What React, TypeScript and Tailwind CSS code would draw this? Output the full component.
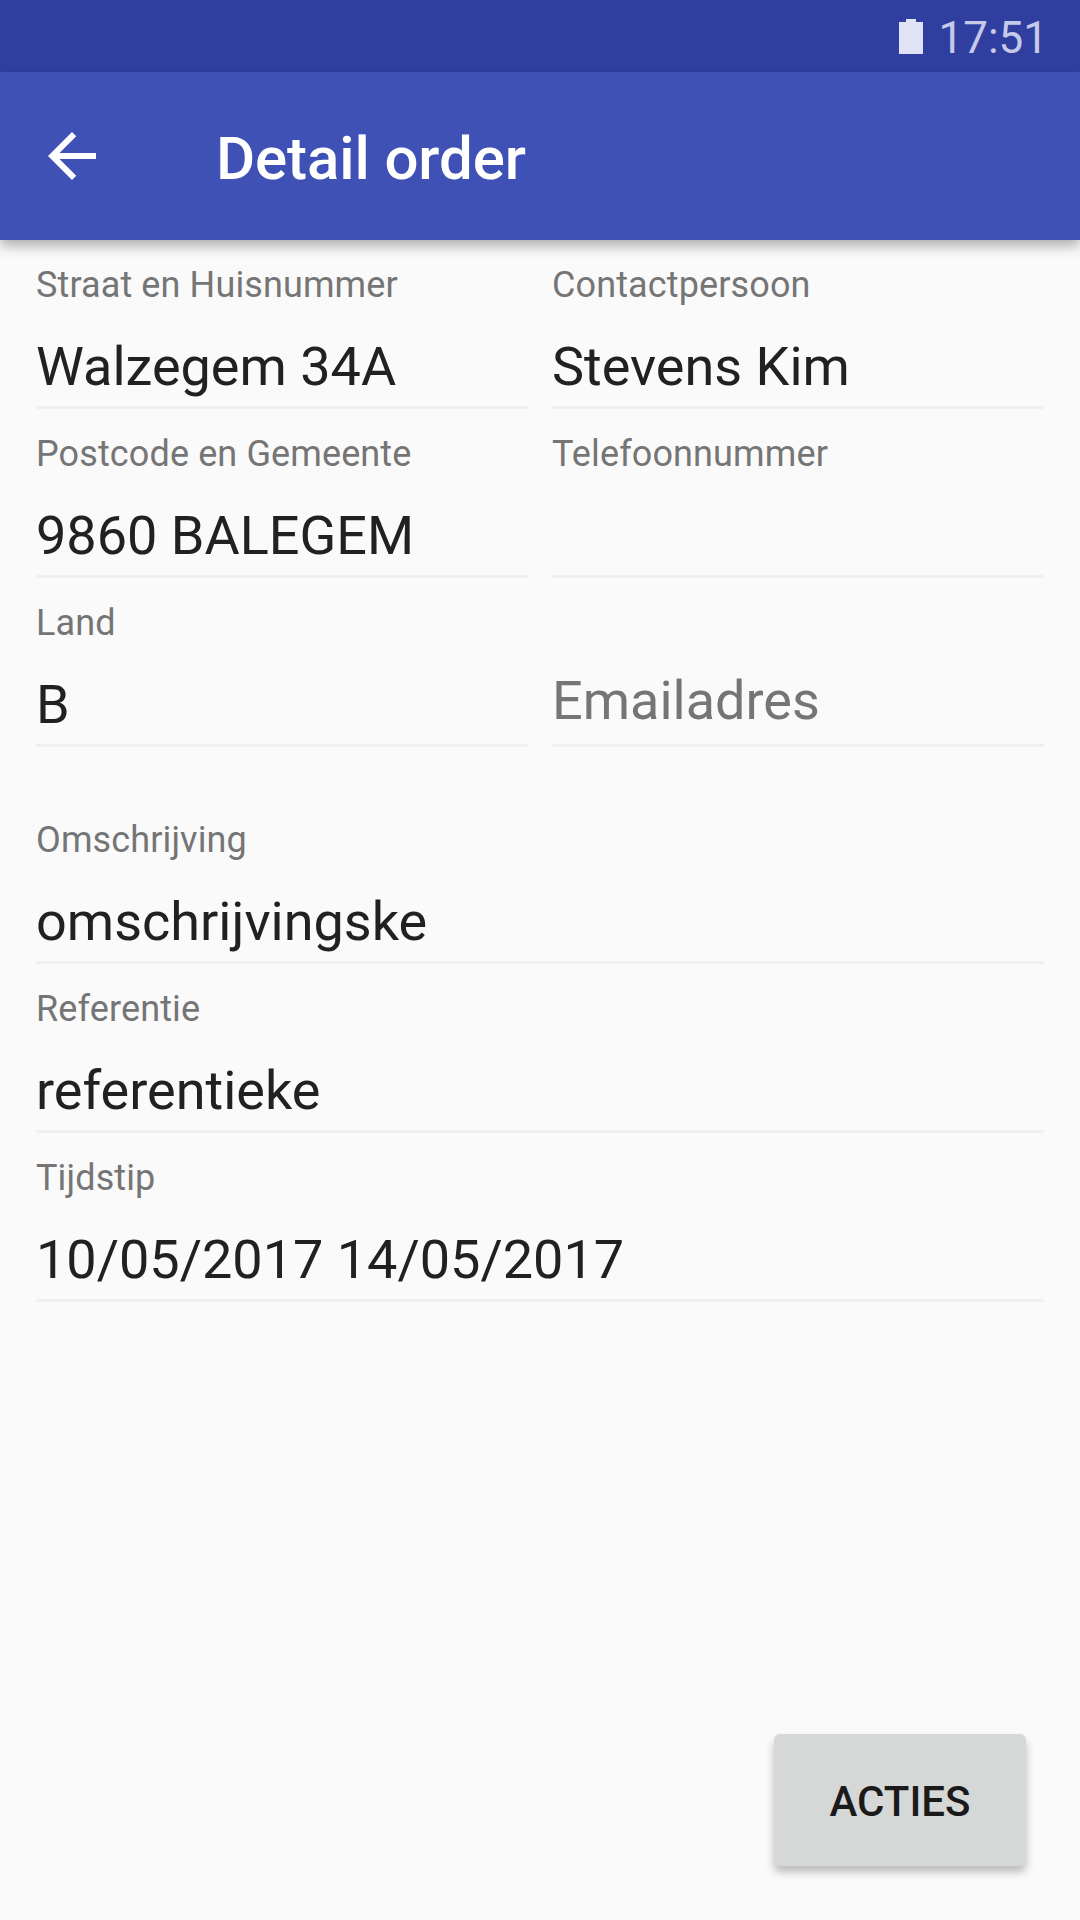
const font = { fontFamily: 'Roboto, sans-serif' };

function Field({ label, value, hint }: { label?: string; value?: string; hint?: string }) {
  return (
    <div className="flex h-[169px] flex-col border-b-[3px] border-[#f0f0f0]">
      <div className="h-[71px] pt-[19px] text-[36px] leading-[52px] tracking-[0.12px] text-[#757575]">{label}</div>
      {hint ? (
        <div className="mt-[20px] text-[54px] leading-[64px] text-[#757575]">{hint}</div>
      ) : (
        <div className="mt-[24px] text-[54px] leading-[64px] text-[#212121]">{value}</div>
      )}
    </div>
  );
}

export default function App() {
  return (
    <div className="flex h-[1920px] w-[1080px] flex-col bg-[#fafafa]" style={font}>
      {/* Status bar */}
      <div className="flex h-[72px] items-center justify-end bg-[#303f9f] pr-[32px]">
        <svg width="24" height="35" viewBox="0 0 24 35" className="mr-[15px] mt-[1px]">
          <path d="M7 0h10v3h7v32H0V3h7z" fill="#e0e3f4" />
        </svg>
        <span className="pt-[3px] text-[44px] leading-[72px] text-[#c5cae9]">17:51</span>
      </div>

      {/* App bar */}
      <div className="relative z-10 flex h-[168px] items-center bg-[#3f51b5] pl-[36px] shadow-[0_6px_12px_rgba(0,0,0,0.3)]">
        <svg width="72" height="72" viewBox="0 0 24 24" fill="#ffffff">
          <path d="M20 11H7.83l5.59-5.59L12 4l-8 8 8 8 1.41-1.41L7.83 13H20v-2z" />
        </svg>
        <h1 className="ml-[108px] pt-[5px] text-[60px] font-medium tracking-[-0.1px] text-white">Detail order</h1>
      </div>

      {/* Address fields */}
      <div className="grid grid-cols-2 gap-x-[24px] px-[36px]">
        <Field label="Straat en Huisnummer" value="Walzegem 34A" />
        <Field label="Contactpersoon" value="Stevens Kim" />
        <Field label="Postcode en Gemeente" value="9860 BALEGEM" />
        <Field label="Telefoonnummer" />
        <Field label="Land" value="B" />
        <Field hint="Emailadres" />
      </div>

      {/* Order fields */}
      <div className="mt-[48px] flex flex-col px-[36px]">
        <Field label="Omschrijving" value="omschrijvingske" />
        <Field label="Referentie" value="referentieke" />
        <Field label="Tijdstip" value="10/05/2017 14/05/2017" />
      </div>

      <button className="mr-[54px] mb-[54px] mt-auto h-[132px] w-[252px] self-end rounded-[6px] bg-[#d6d7d7] pt-[2px] text-[42px] font-medium text-[#1a1a1a] shadow-[0_6px_9px_rgba(0,0,0,0.25)]">
        ACTIES
      </button>
    </div>
  );
}
